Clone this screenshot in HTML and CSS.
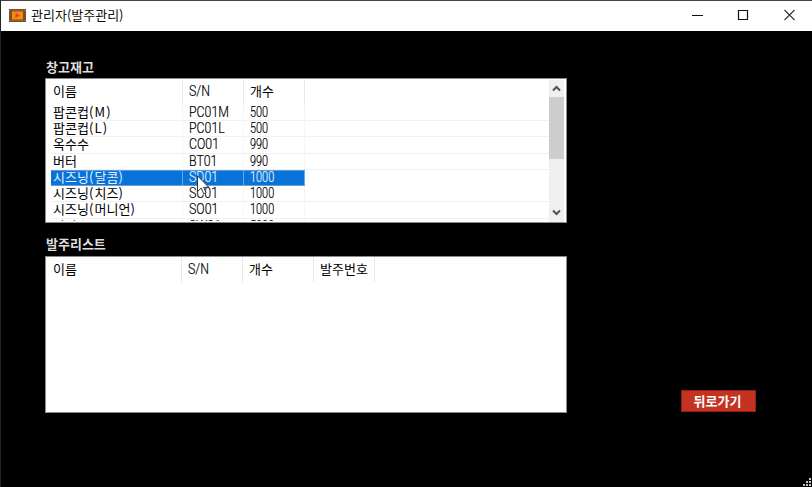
FILE: index.html
```html
<!DOCTYPE html>
<html lang="ko">
<head>
<meta charset="utf-8">
<title>관리자(발주관리)</title>
<link rel="stylesheet" href="styles.css">
</head>
<body>
<div class="window">
  <header class="titlebar">
    <svg class="app-icon" width="17" height="13" viewBox="0 0 17 13"><rect width="17" height="13" fill="#79502c"/><path d="M0 1.500h17M0 11.500h17" stroke="#a5652b" stroke-dasharray="2 1"/><rect x="3" y="2.500" width="11" height="8" fill="#f98b0c"/><path d="M6.500 4l4.500 2.500L6.500 9z" fill="#ee3a3c"/></svg>
    <h1 class="title">관리자(발주관리)</h1>
    <svg class="controls" width="106" height="12" viewBox="0 0 106 12" fill="none"><path d="M0 6.500h11" stroke="#111"/><path d="M46.500 1.500h9v9h-9z" stroke="#111" stroke-width="1.200"/><path d="M92.500 1l10 10M102.500 1l-10 10" stroke="#333" stroke-width="1.100"/></svg>
  </header>
  <main class="content">
    <section class="lists">
      <h2 class="label">창고재고</h2>
      <div class="listbox stock">
        <div class="rows">
          <div class="row head"><span>이름</span><span><i class="sn">S/N</i></span><span>개수</span></div>
          <div class="row"><span>팝콘컵<i class="paren">(M)</i></span><span><i class="sn">PC01M</i></span><span><i class="num">500</i></span></div>
          <div class="row"><span>팝콘컵<i class="paren">(L)</i></span><span><i class="sn">PC01L</i></span><span><i class="num">500</i></span></div>
          <div class="row"><span>옥수수</span><span><i class="sn">CO01</i></span><span><i class="num">990</i></span></div>
          <div class="row"><span>버터</span><span><i class="sn">BT01</i></span><span><i class="num">990</i></span></div>
          <div class="row selected"><span>시즈닝<i class="paren">(</i>달콤<i class="paren">)</i></span><span><i class="sn">SD01</i></span><span><i class="num">1000</i></span></div>
          <div class="row"><span>시즈닝<i class="paren">(</i>치즈<i class="paren">)</i></span><span><i class="sn">SC01</i></span><span><i class="num">1000</i></span></div>
          <div class="row"><span>시즈닝<i class="paren">(</i>머니언<i class="paren">)</i></span><span><i class="sn">SO01</i></span><span><i class="num">1000</i></span></div>
          <div class="row"><span>탄산수</span><span><i class="sn">SW01</i></span><span><i class="num">5000</i></span></div>
        </div>
        <div class="scrollbar">
          <svg width="15" height="17" viewBox="0 0 15 17"><path d="M4 10.500l3.500-3.500 3.500 3.500" fill="none" stroke="#505050" stroke-width="2"/></svg>
          <div class="thumb"></div>
          <svg class="down" width="15" height="17" viewBox="0 0 15 17"><path d="M4 5.500l3.500 3.500 3.500-3.500" fill="none" stroke="#505050" stroke-width="2"/></svg>
        </div>
        <svg class="cursor" width="13" height="20" viewBox="0 0 13 20"><path d="M.5.800v15.700l3.700-3.500 2.600 5.800 2.300-1-2.500-5.500h5.200z" fill="#fff" stroke="#222" stroke-width=".9"/></svg>
      </div>
      <h2 class="label second">발주리스트</h2>
      <div class="listbox orders">
        <div class="row head"><span>이름</span><span><i class="sn">S/N</i></span><span>개수</span><span>발주번호</span></div>
      </div>
    </section>
    <button class="back">뒤로가기</button>
  </main>
  <svg class="grip" width="10" height="9" viewBox="0 0 10 9" fill="#c4c4c4"><path d="M7 0h2v2H7zM4 3h2v2H4zM7 3h2v2H7zM1 6h2v2H1zM4 6h2v2H4zM7 6h2v2H7z"/></svg>
</div>
</body>
</html>
```
FILE: styles.css
```css
* { box-sizing: border-box; }
body { margin: 0; background: #000; font: 13px/16px "Noto Sans CJK KR", sans-serif; }
.window { position: relative; width: 812px; height: 487px; overflow: hidden; background: #000; border-left: 1px solid #242424; }
.titlebar { display: flex; align-items: center; height: 31px; padding: 0 14px 2px 8px; background: #fff; border-top: 1px solid #444; }
.title { flex: 1; margin: 0 0 0 5px; font-size: 13px; font-weight: 400; color: #111; }
.content { display: flex; justify-content: space-between; padding: 28px 56px 0 44px; }
.lists { width: 522px; }
.label { margin: 0 0 3px 1px; font-size: 13px; line-height: 16px; font-weight: 700; color: #dedede; }
.label.second { margin: 13px 0 4px 1px; }
.listbox { position: relative; width: 522px; background: #fff; border: 1px solid #8a8a8a; color: #000; }
.stock { display: flex; height: 145px; padding: 1px 2px 0 0; }
.orders { height: 157px; }
.rows { flex: 1; height: 141px; padding-left: 5px; overflow: hidden; }
.row { display: grid; grid-template-columns: 132px 61px 61px 1fr; height: 16.25px; line-height: 13px; border-bottom: 1px solid #f1f1f1; font-weight: 400; white-space: nowrap; }
.row span { padding-left: 2px; border-right: 1px solid #f5f5f5; }
.row span + span { padding-left: 6px; }
.head { height: 24.75px; line-height: 22px; border-bottom: 0; }
.head span { border-color: #e8e8e8; }
.orders .head { grid-template-columns: 131px 61px 71px 61px; height: 25px; margin-left: 5px; line-height: 24px; }
.selected { width: 254px; background: #0874d9; color: #e0f0ff; box-shadow: inset 0 1px #5e9bd0; border-bottom-color: #6f9cc4; }
.selected span { border-color: #65a9e6; }
.sn, .num { display: inline-block; font: 300 14px/15px Roboto, sans-serif; -webkit-text-stroke: .2px; transform-origin: left; vertical-align: top; }
.sn { transform: scaleX(.88); }
.num { transform: scaleX(.78); }
.head .sn { line-height: inherit; }
.paren { font-style: normal; letter-spacing: 1.2px; }
.scrollbar { width: 15px; height: 142px; background: #f0f0f0; display: flex; flex-direction: column; }
.thumb { height: 62px; background: #cdcdcd; }
.down { margin-top: auto; }
.cursor { position: absolute; left: 151px; top: 96px; }
.back { width: 75px; height: 22px; margin-top: 331px; padding: 0 2px 0 0; border: 1px solid #8f2018; background: #c43322; color: #fff; font: 700 13px/18px "Noto Sans CJK KR", sans-serif; }
.grip { position: absolute; right: 0; bottom: 0; }
```
